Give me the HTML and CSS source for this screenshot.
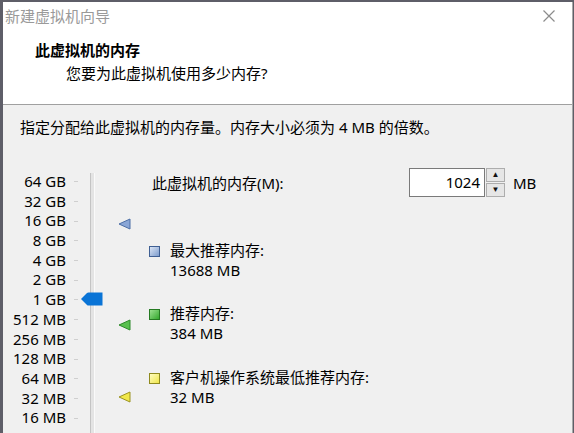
FILE: index.html
```html
<!DOCTYPE html>
<html lang="zh-CN">
<head>
  <meta charset="UTF-8">
  <title>新建虚拟机向导</title>
  <link rel="stylesheet" href="styles.css">
</head>
<body>
  <div class="window">
    <header class="header">
      <div class="titlebar">
        <span class="title">新建虚拟机向导</span>
        <svg class="close" width="12" height="12" viewBox="0 0 12 12">
          <path d="M0.5 0.5 L11.5 11.5 M11.5 0.5 L0.5 11.5" stroke="#8c8c8c" stroke-width="1.2" fill="none"/>
        </svg>
      </div>
      <h1>此虚拟机的内存</h1>
      <p class="subtitle">您要为此虚拟机使用多少内存?</p>
    </header>

    <main class="content">
      <p class="intro">指定分配给此虚拟机的内存量。内存大小必须为 4 MB 的倍数。</p>

      <div class="memory">
        <div class="scale">
          <ul class="labels">
            <li><span>64 GB</span><i></i></li>
            <li><span>32 GB</span><i></i></li>
            <li><span>16 GB</span><i></i></li>
            <li><span>8 GB</span><i></i></li>
            <li><span>4 GB</span><i></i></li>
            <li><span>2 GB</span><i></i></li>
            <li><span>1 GB</span><i></i></li>
            <li><span>512 MB</span><i></i></li>
            <li><span>256 MB</span><i></i></li>
            <li><span>128 MB</span><i></i></li>
            <li><span>64 MB</span><i></i></li>
            <li><span>32 MB</span><i></i></li>
            <li><span>16 MB</span><i></i></li>
            <li><span>8 MB</span><i></i></li>
          </ul>
          <div class="track"></div>

          <svg class="thumb" width="23" height="14" viewBox="0 0 23 14">
            <path d="M1 7 L7 1 Q7.5 0.5 8.5 0.5 L22.5 0.5 L22.5 13.5 L8.5 13.5 Q7.5 13.5 7 13 Z" fill="#0a74d6"/>
          </svg>
          <svg class="marker max" width="13" height="12" viewBox="0 0 13 12">
            <path d="M1 6 L12 1 L12 11 Z" fill="#8aa6d6" stroke="#4d6fa6" stroke-width="1"/>
          </svg>
          <svg class="marker rec" width="13" height="12" viewBox="0 0 13 12">
            <path d="M1 6 L12 1 L12 11 Z" fill="#58c04e" stroke="#2d8a2a" stroke-width="1"/>
          </svg>
          <svg class="marker min" width="13" height="12" viewBox="0 0 13 12">
            <path d="M1 6 L12 1 L12 11 Z" fill="#f1e84a" stroke="#9b9322" stroke-width="1"/>
          </svg>
        </div>

        <div class="details">
          <div class="size-row">
            <label class="size-label">此虚拟机的内存(M):</label>
            <div class="spin">
              <span class="spin-value">1024</span>
              <div class="spin-buttons">
                <button class="spin-btn">&#9650;</button>
                <button class="spin-btn">&#9660;</button>
              </div>
            </div>
            <span class="unit">MB</span>
          </div>

          <div class="info">
            <span class="swatch swatch-max"></span>
            <div>
              <div>最大推荐内存:</div>
              <div>13688 MB</div>
            </div>
          </div>
          <div class="info">
            <span class="swatch swatch-rec"></span>
            <div>
              <div>推荐内存:</div>
              <div>384 MB</div>
            </div>
          </div>
          <div class="info">
            <span class="swatch swatch-min"></span>
            <div>
              <div>客户机操作系统最低推荐内存:</div>
              <div>32 MB</div>
            </div>
          </div>
        </div>
      </div>
    </main>
  </div>
</body>
</html>
```

FILE: styles.css
```css
body { margin: 0; background: #5e5e68; font-family: "Noto Sans", "Noto Sans CJK SC", sans-serif; font-size: 15px; color: #000; }
.window { margin: 2px 0 0 3px; width: 569px; height: 431px; background: #f0f0f0; border-right: 1px solid #a8a8a8; overflow: hidden; }

.header { background: #fff; border-bottom: 1px solid #a0a0a0; height: 102px; }
.titlebar { display: flex; justify-content: space-between; align-items: center; height: 28px; padding: 0 17px 0 2px; }
.title { color: #9a9a9a; line-height: 28px; }
.close { display: block; }
.header h1 { margin: 10px 0 0 32px; font-size: 15px; font-weight: bold; line-height: 20px; }
.subtitle { margin: 3px 0 0 63px; line-height: 20px; }

.content { padding-top: 12px; }
.intro { margin: 0 0 0 17px; line-height: 20px; }

.memory { display: flex; margin-top: 35px; }

.scale { position: relative; display: flex; width: 130px; height: 300px; }
.labels { list-style: none; margin: 0; padding: 0; }
.labels li { display: flex; align-items: center; height: 19.7px; }
.labels span { width: 63px; text-align: right; line-height: 19.7px; white-space: nowrap; }
.labels i { width: 4px; height: 1px; margin-left: 8px; background: #cfcfcf; }
.track { width: 3px; margin: 1px 0 0 12px; background: #e4e4e4; border-left: 1px solid #c4c4c4; border-right: 1px solid #fafafa; }

.thumb { position: absolute; left: 77px; top: 120px; }
.marker { position: absolute; left: 115px; }
.marker.max { top: 46px; }
.marker.rec { top: 147px; }
.marker.min { top: 219px; }

.details { display: flex; flex-direction: column; margin-left: 16px; margin-top: -4px; }
.size-row { display: flex; align-items: center; height: 29px; }
.size-label { width: 260px; padding-left: 3px; box-sizing: border-box; }
.spin { display: flex; height: 29px; }
.spin-value { width: 70px; height: 27px; border: 1px solid #7a7a7a; background: #fff; text-align: right; padding-right: 4px; line-height: 27px; }
.spin-buttons { display: flex; flex-direction: column; margin-left: 1px; }
.spin-btn { width: 19px; height: 14px; padding: 0; margin: 0 0 1px; border: 1px solid #adadad; background: #e6e6e6; font-size: 8px; line-height: 12px; color: #111; }
.unit { margin-left: 8px; }

.info { display: flex; margin-top: 44px; line-height: 19.7px; }
.info + .info { margin-top: 24px; }
.swatch { width: 9px; height: 9px; margin: 5px 10px 0 0; border: 1px solid; }
.swatch-max { border-color: #3f5f93; background: linear-gradient(135deg, #dbe5f5, #7d9ccd); }
.swatch-rec { border-color: #257a22; background: linear-gradient(135deg, #9ae08f, #34a82e); }
.swatch-min { border-color: #8f8a1e; background: linear-gradient(135deg, #fffcc0, #efe64a); }
```
